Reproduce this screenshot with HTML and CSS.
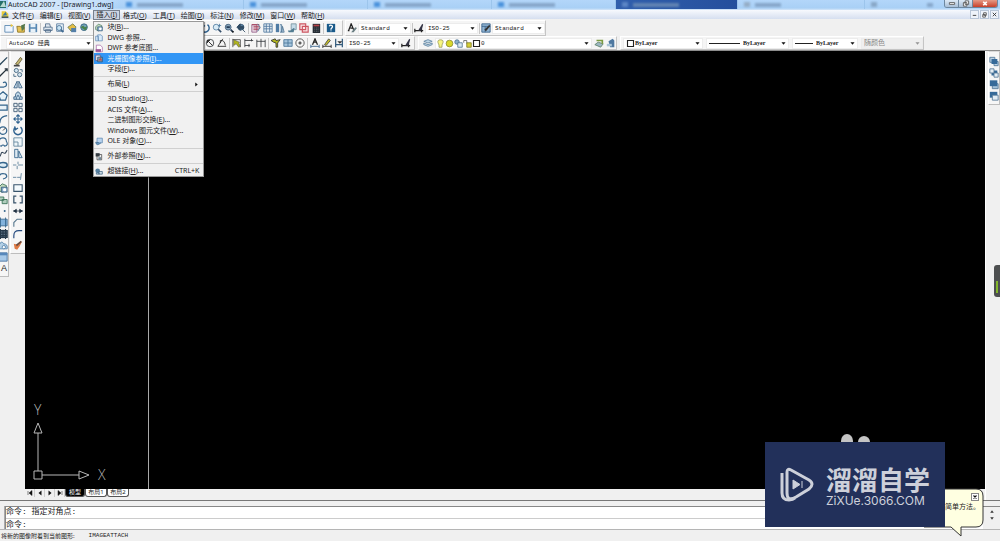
FILE: index.html
```html
<!DOCTYPE html>
<html lang="zh-CN">
<head>
<meta charset="utf-8">
<title>AutoCAD 2007 - [Drawing1.dwg]</title>
<link rel="stylesheet" href="styles.css">
</head>
<body>
<svg class="defs" aria-hidden="true">
<defs>
<symbol id="new" viewBox="0 0 12 12"><path d="M1 3h9l1 1v7H1z" fill="#eef6ff" stroke="#5683ad"/><path d="M8 1l3 2-3 2z" fill="#e8c339"/></symbol>
<symbol id="open" viewBox="0 0 12 12"><path d="M1 4h4l1 1h4v6H2z" fill="#e7c254" stroke="#8c7324"/><path d="M6 3l5-2-1 6-3 3z" fill="#55784d"/></symbol>
<symbol id="save" viewBox="0 0 12 12"><path d="M1 1h10v10H1z" fill="#5687b3"/><path d="M3 1h6v4H3zM3 7h6v4H3z" fill="#e8f1f8"/></symbol>
<symbol id="print" viewBox="0 0 12 12"><path d="M3 5V1h5l1 4M1 5h10v4H1zM3 8h6v3H3z" fill="#dfe7ef" stroke="#536e8c"/></symbol>
<symbol id="preview" viewBox="0 0 12 12"><path d="M2 1h8v9H2z" fill="#edf5fb" stroke="#597b9d"/><circle cx="5" cy="6" r="3" fill="#c9e4f4" stroke="#416b91"/><path d="M7 8l3 3" stroke="#416b91" stroke-width="2"/></symbol>
<symbol id="publish" viewBox="0 0 12 12"><path d="M1 5l6-4 4 4-6 5z" fill="#e4bd45" stroke="#6d7e56"/><path d="M5 6h6v5H5z" fill="#547fa8"/></symbol>
<symbol id="globe" viewBox="0 0 12 12"><circle cx="6" cy="5" r="4" fill="#76a4bc" stroke="#315f7b"/><path d="M2 5l3-2 2 2 3-1-2 5z" fill="#48824b"/></symbol>
<symbol id="zoom" viewBox="0 0 12 12"><circle cx="5" cy="5" r="3.5" fill="#d9ebf6" stroke="#5680a2"/><path d="M7.500 7.500L11 11" stroke="#344f6b" stroke-width="2"/><path d="M9 1v4M7 3h4" stroke="#527ea3"/></symbol>
<symbol id="zoomw" viewBox="0 0 12 12"><circle cx="5" cy="5" r="3.500" fill="#88a5bb" stroke="#415d78"/><path d="M3 5h4M8 8l3 3" stroke="#253b55" stroke-width="2"/><path d="M9 10h3l-1 2z" fill="#111"/></symbol>
<symbol id="zoomp" viewBox="0 0 12 12"><circle cx="6" cy="5" r="3.500" fill="#628baa" stroke="#355675"/><path d="M1 5l4-4v3h4v3H5v2zM8 8l3 3" fill="#304a62" stroke="#304a62"/></symbol>
<symbol id="props" viewBox="0 0 12 12"><path d="M1 2h6v9H1z" fill="#e9dce7" stroke="#945c86"/><path d="M1 2h9M3 4h7M3 6h8M3 8h6" stroke="#a73850"/><path d="M8 1l3 4-3 5" fill="none" stroke="#416b91"/></symbol>
<symbol id="grid" viewBox="0 0 12 12"><path d="M1 1h10v10H1zM1 4h10M1 7h10M4 1v10M8 1v10" fill="#e5edf4" stroke="#5278a0"/></symbol>
<symbol id="palette" viewBox="0 0 12 12"><path d="M1 1h4v10H1z" fill="#4f7ba4"/><path d="M6 2h2v9H6M9 4l2 7H8z" fill="#c1d6e7" stroke="#4f7594"/></symbol>
<symbol id="sheet" viewBox="0 0 12 12"><path d="M5 1h6v7H5z" fill="#c6dce8" stroke="#74919f"/><path d="M1 9c5 1 6-4 8-3L8 11H2z" fill="#527c91"/></symbol>
<symbol id="markup" viewBox="0 0 12 12"><path d="M1 1h7v7H1zM4 4h7v7H4z" fill="#fbe6e7" stroke="#cc5561" stroke-width="1.400"/></symbol>
<symbol id="calc" viewBox="0 0 12 12"><path d="M2 1h9v11H2z" fill="#262c34"/><path d="M3 2h7v2H3z" fill="#b64348"/><path d="M4 6h6M4 8h6M4 10h6" stroke="#6c7479" stroke-dasharray="1 1"/></symbol>
<symbol id="help" viewBox="0 0 12 12"><path d="M1 1h10v10H1z" fill="#195a8a"/><path d="M4 4q1-2 3-1t-1 4v1M6 9v1" fill="none" stroke="#fff" stroke-width="1.500"/></symbol>
<symbol id="textstyle" viewBox="0 0 12 12"><path d="M2 9L5 1l3 7M4 6h3M1 9h2" fill="none" stroke="#222" stroke-width="1.500"/><path d="M5 11l5-6 2 1-4 5z" fill="#6a7e82"/></symbol>
<symbol id="dimstyle" viewBox="0 0 12 12"><path d="M1 7v4M1 9h10M9 7v4" stroke="#222" stroke-width="1.500"/><path d="M5 9l5-8 1 1-2 7z" fill="#334"/></symbol>
<symbol id="tablestyle" viewBox="0 0 12 12"><path d="M1 1h10v10H1zM1 4h10M5 4v7" fill="#91b4d2" stroke="#355f89"/><path d="M4 8l6-6 1 2-5 6z" fill="#333"/></symbol>
<symbol id="diameter" viewBox="0 0 12 12"><circle cx="6" cy="6" r="4.500" fill="none" stroke="#34383c"/><path d="M3 3l6 6M3 6V3h3" stroke="#111" fill="none"/></symbol>
<symbol id="angle" viewBox="0 0 12 12"><path d="M7 1L1 10h10M4 6V3q5-1 6 6" fill="none" stroke="#222"/></symbol>
<symbol id="quickdim" viewBox="0 0 12 12"><path d="M1 1v10M10 2v9M1 2h9" stroke="#444" fill="none"/><path d="M2 2l7 3-1 1 2 4-2 1-3-4-3 2z" fill="#b0b41c" stroke="#444" stroke-width=".6"/></symbol>
<symbol id="baseline" viewBox="0 0 12 12"><path d="M1 1v10M9 1v3M6 7v4M1 3h10M1 9h6" stroke="#35393d" fill="none"/></symbol>
<symbol id="continue" viewBox="0 0 12 12"><path d="M1 2v9M6 1v10M11 2v9M1 4h10" stroke="#35393d" fill="none"/></symbol>
<symbol id="leader" viewBox="0 0 12 12"><path d="M0 3l5-2 1 2 5-1-3 4v5H6V6L3 5z" fill="#b0b41c" stroke="#333"/></symbol>
<symbol id="tolerance" viewBox="0 0 12 12"><path d="M1 2h10v8H1zM1 6h10M6 2v8" fill="#a8c6dd" stroke="#487397"/></symbol>
<symbol id="center" viewBox="0 0 12 12"><circle cx="6" cy="6" r="5" fill="none" stroke="#444"/><path d="M6 4v4M4 6h4" stroke="#111"/></symbol>
<symbol id="dimedit" viewBox="0 0 12 12"><path d="M3 8L6 1l3 7M4 5h4" fill="none" stroke="#222" stroke-width="1.500"/><path d="M1 8v4M11 8v4M1 10h10" stroke="#355f89"/></symbol>
<symbol id="dimtedit" viewBox="0 0 12 12"><path d="M1 8v4M1 10h10M11 8v4" stroke="#222"/><path d="M3 8l5-7 2 2-5 6z" fill="#c4bd28" stroke="#444"/></symbol>
<symbol id="dimup" viewBox="0 0 12 12"><path d="M2 1v10M10 1v10M2 8h8" stroke="#345c7d" stroke-width="1.500"/><path d="M4 4h6l-3 3z" fill="#333"/></symbol>
<symbol id="layers" viewBox="0 0 12 12"><path d="M1 4l5-2 5 2-5 2zM1 6l5 2 5-2v2l-5 2-5-2z" fill="#c0d8e9" stroke="#5e829f"/></symbol>
<symbol id="bulb" viewBox="0 0 12 12"><path d="M4 8Q0 1 6 1t2 7v3H4z" fill="#f7f582" stroke="#96965a"/></symbol>
<symbol id="sun" viewBox="0 0 12 12"><circle cx="6" cy="6" r="4.500" fill="#d9d82a" stroke="#858833"/></symbol>
<symbol id="freeze" viewBox="0 0 12 12"><circle cx="4" cy="4" r="3" fill="#8db1ca" stroke="#466b8b"/><path d="M5 5h6v6H5z" fill="#d9e8f1" stroke="#466b8b"/></symbol>
<symbol id="lock" viewBox="0 0 12 12"><path d="M1 5V2h4v4" fill="none" stroke="#555"/><path d="M5 5h6v6H5z" fill="#d5cf36" stroke="#777321"/></symbol>
<symbol id="swatch" viewBox="0 0 12 12"><path d="M2 2h8v8H2z" fill="#fff" stroke="#222" stroke-width="1.500"/></symbol>
<symbol id="layerprev" viewBox="0 0 12 12"><path d="M1 8l4-3 6 2-3 4z" fill="#9eb8c4" stroke="#5b7f68"/><path d="M3 3h7v4" fill="none" stroke="#7b9b40" stroke-width="2"/></symbol>
<symbol id="layerset" viewBox="0 0 12 12"><path d="M3 4l5-3 2 2v8H5z" fill="#4e78a0"/><path d="M1 7h6v3H1z" fill="#a9c4d7"/></symbol>
<symbol id="arrow" viewBox="0 0 12 12"><path d="M1 3h10L6 9z" fill="#111"/></symbol>
<symbol id="line" viewBox="0 0 12 12"><path d="M1 11L11 1" stroke="#29475b" stroke-width="1.500"/></symbol>
<symbol id="xline" viewBox="0 0 12 12"><path d="M1 11L11 1M8 1h3v3" stroke="#26333c" stroke-width="1.500" fill="none"/></symbol>
<symbol id="pline" viewBox="0 0 12 12"><path d="M1 9h6q4-1 3-4T6 4" stroke="#35658c" stroke-width="1.500" fill="none"/></symbol>
<symbol id="polygon" viewBox="0 0 12 12"><path d="M6 1l5 4-2 6H3L1 5z" stroke="#35658c" stroke-width="1.500" fill="#e8f2f8"/></symbol>
<symbol id="rect" viewBox="0 0 12 12"><path d="M1 3h10v6H1z" stroke="#35658c" stroke-width="1.500" fill="#e8f2f8"/></symbol>
<symbol id="arc" viewBox="0 0 12 12"><path d="M2 11q0-8 9-9" stroke="#35658c" stroke-width="1.500" fill="none"/></symbol>
<symbol id="circle" viewBox="0 0 12 12"><circle cx="6" cy="6" r="4.500" stroke="#35658c" stroke-width="1.500" fill="none"/><path d="M6 6l3-3" stroke="#222"/></symbol>
<symbol id="cloud" viewBox="0 0 12 12"><path d="M2 4q0-3 4-3 4 0 4 4 3 5-2 6-2-3-4 0-5-1-2-4" stroke="#35658c" stroke-width="1.300" fill="none"/></symbol>
<symbol id="spline" viewBox="0 0 12 12"><path d="M1 10c3 0 2-7 5-5s3 0 5-3" stroke="#345" stroke-width="1.300" fill="none"/></symbol>
<symbol id="ellipse" viewBox="0 0 12 12"><ellipse cx="6" cy="6" rx="5" ry="3" stroke="#35658c" stroke-width="1.800" fill="#dcebf3"/></symbol>
<symbol id="earc" viewBox="0 0 12 12"><path d="M1 6q2-5 8-3 4 4-3 6" stroke="#35658c" stroke-width="1.500" fill="none"/></symbol>
<symbol id="block" viewBox="0 0 12 12"><path d="M1 5l4-4 5 2v6l-5 2-4-2z" fill="#c6dcbf" stroke="#386e55"/><path d="M4 5h7v6H4z" fill="#87aaca" stroke="#365b79"/><circle cx="8" cy="8" r="2" fill="#fff"/></symbol>
<symbol id="mkblock" viewBox="0 0 12 12"><path d="M1 3h6v4H1zM5 6h6v5H5z" fill="#b1cdbd" stroke="#346e52"/></symbol>
<symbol id="point" viewBox="0 0 12 12"><circle cx="8" cy="6" r="1.200" fill="#35658c"/></symbol>
<symbol id="hatch" viewBox="0 0 12 12"><path d="M1 2h10v8H1zM3 0v12M9 0v12" stroke="#35658c" fill="#82b2dc"/></symbol>
<symbol id="gradient" viewBox="0 0 12 12"><path d="M1 2h10v8H1zM3 0v12M9 0v12M2 5h9M2 8h9M6 1v10" stroke="#26394a" stroke-width="1.500" fill="#63788c"/></symbol>
<symbol id="region" viewBox="0 0 12 12"><path d="M1 10V6q3-7 6-2 5 0 4 6z" stroke="#517fa8" fill="#b3d0e6"/><circle cx="7" cy="8" r="2" fill="#fff" stroke="#517fa8"/></symbol>
<symbol id="table" viewBox="0 0 12 12"><path d="M1 1h10v10H1z" stroke="#3e6c9a" fill="#a8c9e8"/><path d="M1 1h10v3H1z" fill="#5888bb"/></symbol>
<symbol id="erase" viewBox="0 0 12 12"><path d="M3 9l6-8 2 2-5 7z" fill="#c5b774" stroke="#655c35"/><path d="M1 11h7" stroke="#444" stroke-width="2"/></symbol>
<symbol id="copy" viewBox="0 0 12 12"><circle cx="4" cy="3" r="2.500" fill="#d3e4ef" stroke="#375b77"/><circle cx="8" cy="8" r="2.500" fill="#d3e4ef" stroke="#375b77"/><path d="M8 2h3v3M1 7v3h3" stroke="#375b77" fill="none"/></symbol>
<symbol id="mirror" viewBox="0 0 12 12"><path d="M5 2v8H1zM7 2v8h4z" fill="#c9ddeb" stroke="#365e82"/></symbol>
<symbol id="offset" viewBox="0 0 12 12"><path d="M1 10V7h2V4q3-6 6 0v3h2v3zM4 10V8l2-3 2 3v2" fill="#bdd4e5" stroke="#365e82"/></symbol>
<symbol id="array" viewBox="0 0 12 12"><path d="M1 1h4v4H1zM7 1h4v4H7zM1 7h4v4H1zM7 7h4v4H7z" fill="#eef5f9" stroke="#35516b"/></symbol>
<symbol id="move" viewBox="0 0 12 12"><path d="M6 1v10M1 6h10M4 3l2-2 2 2M4 9l2 2 2-2M3 4L1 6l2 2M9 4l2 2-2 2" fill="none" stroke="#30628f" stroke-width="1.300"/></symbol>
<symbol id="rotate" viewBox="0 0 12 12"><path d="M3 2a5 5 0 1 0 6 0M2 1l1 4 3-2" fill="none" stroke="#30628f" stroke-width="1.700"/></symbol>
<symbol id="scale" viewBox="0 0 12 12"><path d="M1 1h10v10H1zM1 6h5v5" fill="#eef5f9" stroke="#5d8099"/></symbol>
<symbol id="stretch" viewBox="0 0 12 12"><path d="M2 1h4v10H2zM7 3l4 8H7z" fill="#dfeaf2" stroke="#35658c"/></symbol>
<symbol id="trim" viewBox="0 0 12 12"><path d="M0 6h4M6 6h6M6 2v3M5 7v4" stroke="#547b96"/></symbol>
<symbol id="extend" viewBox="0 0 12 12"><path d="M0 7h4M5 7h4M10 2L9 10" stroke="#547b96"/></symbol>
<symbol id="breakp" viewBox="0 0 12 12"><path d="M1 2h10v8H1z" fill="#f4fafd" stroke="#38536b" stroke-width="1.300"/></symbol>
<symbol id="break" viewBox="0 0 12 12"><path d="M4 10H1V2h3M8 2h3v8H8" fill="none" stroke="#38536b" stroke-width="1.500"/></symbol>
<symbol id="join" viewBox="0 0 12 12"><path d="M0 6h12M1 6l3-2v4zM11 6L8 4v4z" fill="#234" stroke="#234"/></symbol>
<symbol id="chamfer" viewBox="0 0 12 12"><path d="M1 11V6l4-4h6" fill="none" stroke="#56778e" stroke-width="1.300"/></symbol>
<symbol id="fillet" viewBox="0 0 12 12"><path d="M1 11V8q0-6 6-6h4" fill="none" stroke="#274c80" stroke-width="1.400"/></symbol>
<symbol id="explode" viewBox="0 0 12 12"><path d="M1 4l5 1 5-4-3 6-3 4-3-1z" fill="#df7a45"/><path d="M4 6l6-5" stroke="#684a3e" stroke-width="2"/></symbol>
<symbol id="dwg" viewBox="0 0 12 12"><path d="M1 4h4v7H1zM4 2h5l2 2v7H5z" fill="#d8eafa" stroke="#5983b0"/></symbol>
<symbol id="dwf" viewBox="0 0 12 12"><path d="M2 1h6l3 3v7H2z" fill="#fff" stroke="#a05ba2"/><path d="M1 7h8v4H1z" fill="#9a5596"/></symbol>
<symbol id="image" viewBox="0 0 12 12"><path d="M1 1h7v8H1z" fill="#e8e8f4" stroke="#624c78"/><path d="M4 4h7v7H4z" fill="#86a3ad" stroke="#284967"/><path d="M5 9l3-4 3 4z" fill="#c54b48"/></symbol>
<symbol id="ole" viewBox="0 0 12 12"><path d="M3 1h8v7H3z" fill="#b9d4ef" stroke="#517da7"/><path d="M9 8q-7 6-8-1l5 1" fill="#699bc3" stroke="#3c678c"/></symbol>
<symbol id="xref" viewBox="0 0 12 12"><path d="M3 3h7v8H3z" fill="#eee" stroke="#333"/><path d="M1 1h6v5H1z" fill="#343c43"/><path d="M5 7h4v4H5z" fill="#718796"/></symbol>
<symbol id="link" viewBox="0 0 12 12"><circle cx="4" cy="5" r="3.500" fill="#547f9f"/><path d="M2 8h4v2H2zM6 6h5v4H6z" fill="#cbdce6" stroke="#315879"/></symbol>
<symbol id="front" viewBox="0 0 12 12"><path d="M1 1h6v6H1zM6 6h5v5H6z" fill="#bad2e5" stroke="#527695"/><path d="M3 3h7v6H3z" fill="#366a99"/></symbol>
<symbol id="back" viewBox="0 0 12 12"><path d="M3 3h7v6H3z" fill="#366a99"/><path d="M1 1h5v5H1zM6 6h5v5H6z" fill="#e3edf4" stroke="#527695"/></symbol>
<symbol id="above" viewBox="0 0 12 12"><path d="M4 5h7v6H4z" fill="#a4c2d9" stroke="#527695"/><path d="M1 1h9v7H1z" fill="#366a99"/></symbol>
<symbol id="under" viewBox="0 0 12 12"><path d="M1 1h9v7H1z" fill="#366a99"/><path d="M4 5h7v6H4z" fill="#e3edf4" stroke="#527695"/></symbol>
<symbol id="doc" viewBox="0 0 12 12"><path d="M1 1h6l4 4v6H1z" fill="#e7cb38"/><path d="M2 8l5-6 2 5z" fill="#3976a7"/><path d="M1 9h10v2H1z" fill="#23425c"/></symbol>
<symbol id="first" viewBox="0 0 12 12"><path d="M2 2v8M10 1v10L4 6z" fill="#111" stroke="#111"/></symbol>
<symbol id="prev" viewBox="0 0 12 12"><path d="M9 1v10L3 6z" fill="#111"/></symbol>
<symbol id="next" viewBox="0 0 12 12"><path d="M3 1v10l6-5z" fill="#111"/></symbol>
<symbol id="last" viewBox="0 0 12 12"><path d="M10 2v8M2 1v10l6-5z" fill="#111" stroke="#111"/></symbol>
</defs>
</svg>

<header class="titlebar">
  <svg class="app-icon" viewBox="0 0 8 10"><path d="M0 1h6v7H0z" fill="#26706b"/><path d="M0 7L4 1l2 6z" fill="#b8dad1"/></svg>
  <h1 class="title">AutoCAD 2007 - [Drawing1.dwg]</h1>
  <div class="glass" aria-hidden="true">
    <span class="ghost"></span><span class="ghost"></span><span class="ghost"></span><span class="ghost"></span><span class="ghost ghost-active"></span><span class="ghost ghost-grey"></span><span class="ghost ghost-small"></span>
  </div>
  <div class="window-buttons">
    <button class="wbtn" aria-label="最小化"><svg viewBox="0 0 12 8"><path d="M3 3h6v2H3z" fill="#fff" stroke="#555"/></svg></button>
    <button class="wbtn" aria-label="还原"><svg viewBox="0 0 12 8"><path d="M5 1h4v4H5zM3 3h4v4H3z" fill="#fff" stroke="#555"/></svg></button>
    <button class="wbtn wbtn-close" aria-label="关闭"><svg viewBox="0 0 12 8"><path d="M4 2l4 4M8 2L4 6" stroke="#fff" stroke-width="2"/></svg></button>
  </div>
</header>

<nav class="menubar">
  <svg class="doc-icon"><use href="#doc"/></svg>
  <button class="menu-btn">文件(<u>F</u>)</button>
  <button class="menu-btn">编辑(<u>E</u>)</button>
  <button class="menu-btn">视图(<u>V</u>)</button>
  <div class="menu-holder">
    <button class="menu-btn menu-open" aria-expanded="true">插入(<u>I</u>)</button>
    <div class="dropdown" role="menu">
      <div class="menu-group">
        <button class="item" role="menuitem"><svg><use href="#block"/></svg><span>块(<u>B</u>)...</span></button>
        <button class="item" role="menuitem"><svg><use href="#dwg"/></svg><span>DWG 参照...</span></button>
        <button class="item" role="menuitem"><svg><use href="#dwf"/></svg><span>DWF 参考底图...</span></button>
        <button class="item item-active" role="menuitem"><svg><use href="#image"/></svg><span>光栅图像参照(<u>I</u>)...</span></button>
        <button class="item" role="menuitem"><svg></svg><span>字段(<u>F</u>)...</span></button>
      </div>
      <div class="menu-group">
        <button class="item" role="menuitem"><svg></svg><span>布局(<u>L</u>)</span><svg class="sub"><use href="#next"/></svg></button>
      </div>
      <div class="menu-group">
        <button class="item" role="menuitem"><svg></svg><span>3D Studio(<u>3</u>)...</span></button>
        <button class="item" role="menuitem"><svg></svg><span>ACIS 文件(<u>A</u>)...</span></button>
        <button class="item" role="menuitem"><svg></svg><span>二进制图形交换(<u>E</u>)...</span></button>
        <button class="item" role="menuitem"><svg></svg><span>Windows 图元文件(<u>W</u>)...</span></button>
        <button class="item" role="menuitem"><svg><use href="#ole"/></svg><span>OLE 对象(<u>O</u>)...</span></button>
      </div>
      <div class="menu-group">
        <button class="item" role="menuitem"><svg><use href="#xref"/></svg><span>外部参照(<u>N</u>)...</span></button>
      </div>
      <div class="menu-group">
        <button class="item" role="menuitem"><svg><use href="#link"/></svg><span>超链接(<u>H</u>)...</span><span class="shortcut">CTRL+K</span></button>
      </div>
    </div>
  </div>
  <button class="menu-btn">格式(<u>O</u>)</button>
  <button class="menu-btn">工具(<u>T</u>)</button>
  <button class="menu-btn">绘图(<u>D</u>)</button>
  <button class="menu-btn">标注(<u>N</u>)</button>
  <button class="menu-btn">修改(<u>M</u>)</button>
  <button class="menu-btn">窗口(<u>W</u>)</button>
  <button class="menu-btn">帮助(<u>H</u>)</button>
  <div class="mdi-buttons">
    <button aria-label="最小化文档"><svg viewBox="0 0 8 8"><path d="M2 5h4" stroke="#333"/></svg></button>
    <button aria-label="还原文档"><svg viewBox="0 0 8 8"><path d="M3 2h3v3H3zM2 4h3v3H2z" fill="#fff" stroke="#555"/></svg></button>
    <button aria-label="关闭文档"><svg viewBox="0 0 8 8"><path d="M2 2l4 4M6 2L2 6" stroke="#333"/></svg></button>
  </div>
</nav>

<div class="toolrow toolrow-top">
  <div class="bar bar-standard">
    <div class="icons icons-file">
      <svg><use href="#new"/></svg><svg><use href="#open"/></svg><svg><use href="#save"/></svg><i class="div"></i><svg><use href="#print"/></svg><svg><use href="#preview"/></svg><svg><use href="#publish"/></svg><svg><use href="#globe"/></svg>
    </div>
    <div class="icons">
      <svg><use href="#rotate"/></svg><svg><use href="#zoom"/></svg><svg><use href="#zoomw"/></svg><svg><use href="#zoomp"/></svg><i class="div"></i><svg><use href="#props"/></svg><svg><use href="#grid"/></svg><svg><use href="#palette"/></svg><svg><use href="#sheet"/></svg><svg><use href="#markup"/></svg><svg><use href="#calc"/></svg><i class="div"></i><svg><use href="#help"/></svg>
    </div>
  </div>
  <div class="bar bar-styles">
    <svg><use href="#textstyle"/></svg>
    <label class="combo combo-style"><select aria-label="文字样式"><option>Standard</option></select><svg class="caret"><use href="#arrow"/></svg></label>
    <i class="div"></i><svg><use href="#dimstyle"/></svg>
    <label class="combo combo-style"><select aria-label="标注样式"><option>ISO-25</option></select><svg class="caret"><use href="#arrow"/></svg></label>
    <i class="div"></i><svg><use href="#tablestyle"/></svg>
    <label class="combo combo-style"><select aria-label="表格样式"><option>Standard</option></select><svg class="caret"><use href="#arrow"/></svg></label>
  </div>
</div>

<div class="toolrow toolrow-bottom">
  <div class="bar bar-workspace">
    <label class="combo combo-workspace"><select aria-label="工作空间"><option>AutoCAD 经典</option></select><svg class="caret"><use href="#arrow"/></svg></label>
  </div>
  <div class="bar bar-dim">
    <svg><use href="#diameter"/></svg><svg><use href="#angle"/></svg><i class="div"></i><svg><use href="#quickdim"/></svg><svg><use href="#baseline"/></svg><svg><use href="#continue"/></svg><i class="div"></i><svg><use href="#leader"/></svg><svg><use href="#tolerance"/></svg><svg><use href="#center"/></svg><i class="div"></i><svg><use href="#dimedit"/></svg><svg><use href="#dimtedit"/></svg><svg><use href="#dimup"/></svg>
    <label class="combo combo-style"><select aria-label="标注样式控制"><option>ISO-25</option></select><svg class="caret"><use href="#arrow"/></svg></label>
    <svg><use href="#dimstyle"/></svg>
  </div>
  <div class="bar bar-layers">
    <svg><use href="#layers"/></svg>
    <label class="combo combo-layer"><svg><use href="#bulb"/></svg><svg><use href="#sun"/></svg><svg><use href="#freeze"/></svg><svg><use href="#lock"/></svg><svg><use href="#swatch"/></svg><select aria-label="图层"><option>0</option></select><svg class="caret"><use href="#arrow"/></svg></label>
    <svg><use href="#layerprev"/></svg><svg><use href="#layerset"/></svg>
  </div>
  <div class="bar bar-props">
    <label class="combo combo-color"><svg><use href="#swatch"/></svg><select aria-label="颜色"><option>ByLayer</option></select><svg class="caret"><use href="#arrow"/></svg></label>
    <label class="combo combo-linetype"><i class="rule rule-long"></i><select aria-label="线型"><option>ByLayer</option></select><svg class="caret"><use href="#arrow"/></svg></label>
    <label class="combo combo-weight"><i class="rule"></i><select aria-label="线宽"><option>ByLayer</option></select><svg class="caret"><use href="#arrow"/></svg></label>
    <label class="combo combo-plot"><select aria-label="打印样式" disabled><option>随颜色</option></select><svg class="caret"><use href="#arrow"/></svg></label>
  </div>
</div>

<main class="workspace">
  <aside class="dock">
    <div class="strip strip-draw">
      <svg><use href="#line"/></svg><svg><use href="#xline"/></svg><svg><use href="#pline"/></svg><svg><use href="#polygon"/></svg><svg><use href="#rect"/></svg><svg><use href="#arc"/></svg><svg><use href="#circle"/></svg><svg><use href="#cloud"/></svg><svg><use href="#spline"/></svg><svg><use href="#ellipse"/></svg><svg><use href="#earc"/></svg><svg><use href="#block"/></svg><svg><use href="#mkblock"/></svg><svg><use href="#point"/></svg><svg><use href="#hatch"/></svg><svg><use href="#gradient"/></svg><svg><use href="#region"/></svg><svg><use href="#table"/></svg><button class="mtext">A</button>
    </div>
    <div class="strip">
      <svg><use href="#erase"/></svg><svg><use href="#copy"/></svg><svg><use href="#mirror"/></svg><svg><use href="#offset"/></svg><svg><use href="#array"/></svg><svg><use href="#move"/></svg><svg><use href="#rotate"/></svg><svg><use href="#scale"/></svg><svg><use href="#stretch"/></svg><svg><use href="#trim"/></svg><svg><use href="#extend"/></svg><svg><use href="#breakp"/></svg><svg><use href="#break"/></svg><svg><use href="#join"/></svg><svg><use href="#chamfer"/></svg><svg><use href="#fillet"/></svg><svg><use href="#explode"/></svg>
    </div>
  </aside>
  <section class="center">
    <div class="canvas">
      <i class="drawn-line"></i>
      <svg class="ucs" viewBox="0 0 84 84"><path d="M5 71h8v8H5zM9 71V33M5 33h8L9 23zM13 75h37M50 71v8l10-4z" fill="none" stroke="#b8b8b8"/><text x="5" y="15">Y</text><text x="69" y="80">X</text></svg>
    </div>
    <div class="tabs">
      <button class="tabnav" aria-label="第一个"><svg><use href="#first"/></svg></button><button class="tabnav" aria-label="上一个"><svg><use href="#prev"/></svg></button><button class="tabnav" aria-label="下一个"><svg><use href="#next"/></svg></button><button class="tabnav" aria-label="最后一个"><svg><use href="#last"/></svg></button>
      <button class="tab tab-active">模型</button><button class="tab">布局1</button><button class="tab">布局2</button>
    </div>
  </section>
  <aside class="dock-right">
    <div class="strip strip-order">
      <svg><use href="#front"/></svg><svg><use href="#back"/></svg><svg><use href="#above"/></svg><svg><use href="#under"/></svg>
    </div>
    <div class="gadget"><i></i></div>
  </aside>
</main>

<section class="command">
  <i class="grip"></i>
  <div class="command-lines">
    <p class="history">命令: 指定对角点:</p>
    <label class="prompt">命令:<input type="text" aria-label="命令"></label>
  </div>
  <div class="scroller"><svg viewBox="0 0 12 12"><path d="M3 8h6L6 4z" fill="#333"/></svg><svg viewBox="0 0 12 12"><path d="M3 4h6L6 8z" fill="#333"/></svg></div>
</section>

<footer class="status"><span>将新的图像附着到当前图形:</span><span class="status-cmd">IMAGEATTACH</span></footer>

<div class="balloon">
  <svg class="balloon-shape" viewBox="0 0 60 50"><path d="M0 1H52Q59 1 59 8V32Q59 39 52 39H37V48L27 39H0z" fill="#ffffe1" stroke="#333"/></svg>
  <button class="balloon-close" aria-label="关闭提示"><svg viewBox="0 0 8 8"><path d="M2 2l4 4M6 2L2 6" stroke="#111" stroke-width="1.500"/></svg></button>
  <p class="balloon-text">简单方法。</p>
</div>

<div class="watermark">
  <svg class="ears" viewBox="0 0 30 8"><ellipse cx="6" cy="7" rx="6" ry="7" fill="#c4c4c4"/><ellipse cx="23" cy="8" rx="6" ry="6" fill="#c4c4c4"/></svg>
  <svg class="logo" viewBox="0 0 36 36"><path d="M3 6V26Q3 33 10 33Q14 33 16 31" fill="none" stroke="#cdd0da" stroke-width="3"/><path d="M8 26V5Q8 1 12 3L30 13Q36 17 30 22L17 30Q8 35 8 26" fill="none" stroke="#cdd0da" stroke-width="3"/><path d="M14 13v9l7-4.500zM23 14v7" fill="#cdd0da" stroke="#cdd0da"/></svg>
  <div class="brand"><strong>溜溜自学</strong><span>ZiXUe.3066.COM</span></div>
</div>
</body>
</html>
```
FILE: styles.css
```css
* { box-sizing: border-box; }
body {
  margin: 0;
  height: 100vh;
  display: flex;
  flex-direction: column;
  position: relative;
  overflow: hidden;
  background: #f0f0f0;
  color: #222;
  font: 7px/10px "Noto Sans", "Noto Sans CJK SC", sans-serif;
}
button, select, input { font: inherit; color: inherit; border: 0; padding: 0; margin: 0; background: none; }
p, h1 { margin: 0; font-weight: 400; }
svg { width: 10px; height: 10px; flex: none; display: block; }
.defs { position: absolute; width: 0; height: 0; }

.titlebar { height: 10px; display: flex; background: linear-gradient(#b3d6fa, #a9d0f6 80%, #d5e6f8); flex: none; }
.app-icon { width: 8px; }
.title { width: 112px; font-size: 7px; line-height: 9px; color: #17212c; background: linear-gradient(90deg, #dcecfb, #c5e0fa 80%, transparent); }
.glass { flex: 1; display: grid; grid-template-columns: repeat(4, 124px) 122px 127px 1fr; overflow: hidden; }
.ghost { height: 9px; display: flex; align-items: center; gap: 5px; padding-left: 6px; border-right: 1px solid #9cc5ec; }
.ghost::before { content: ""; width: 6px; height: 5px; background: #4c93dc; filter: blur(1px); }
.ghost::after { content: ""; width: 46px; height: 4px; background: #7896b8; filter: blur(1px); opacity: .7; }
.ghost-active { background: linear-gradient(90deg, #315fac, #244f9d); }
.ghost-active::before { background: #5c86c6; }
.ghost-grey::before { background: #96aec7; }
.ghost-grey::after { width: 26px; }
.ghost-small { border: 0; }
.ghost-small::before { background: #8aa8c8; }
.ghost-small::after { width: 6px; margin-left: 45px; }
.window-buttons { display: flex; height: 8px; margin-right: 2px; border: 1px solid #6d879f; border-top: 0; border-radius: 0 0 3px 3px; overflow: hidden; }
.wbtn { width: 14px; background: linear-gradient(#dce9f6, #a9bfd6); border-right: 1px solid #6d879f; display: grid; place-items: center; }
.wbtn svg { width: 12px; height: 7px; }
.wbtn-close { width: 24px; border: 0; background: linear-gradient(#e49a87, #c8402a); }

.menubar { height: 10px; display: flex; flex: none; padding-left: 1px; background: linear-gradient(#f7f9fd, #d6dff0); border-bottom: 1px solid #f0f0f0; }
.doc-icon { width: 8px; height: 9px; }
.menu-btn { padding: 0 3px; line-height: 9px; height: 10px; white-space: nowrap; }
.menu-holder { position: relative; }
.menu-open { border: 1px solid #77808e; line-height: 8px; padding: 0 2px; background: #cdd5e3; }
.mdi-buttons { margin-left: auto; display: flex; gap: 1px; padding-right: 1px; }
.mdi-buttons button { width: 9px; height: 9px; border: 1px solid #b8c6d8; background: #eef3fa; }
.mdi-buttons svg { width: 7px; height: 7px; }
.dropdown { position: absolute; left: 0; top: 11px; z-index: 5; width: 111px; background: #f1f1f1; border: 1px solid #999; box-shadow: 1px 1px 1px #0006; }
.menu-group + .menu-group { border-top: 1px solid #d0d0d0; padding-top: 2px; margin-top: 2px; }
.item { width: 100%; height: 10px; line-height: 10px; display: flex; align-items: center; gap: 4px; padding: 0 4px 0 1px; text-align: left; white-space: nowrap; }
.item:nth-child(even) { height: 11px; }
.item svg { width: 8px; height: 9px; }
.item .sub { width: 5px; height: 5px; }
.item span { flex: 1; }
.item .shortcut { flex: none; }
.item-active { background: #3296f5; color: #fff; }

.toolrow { display: flex; flex: none; }
.toolrow-top { height: 16px; gap: 2px; }
.toolrow-bottom { height: 14px; gap: 3px; }
.bar { display: flex; align-items: center; gap: 2px; border: 1px solid; border-color: #fff #c5c5c5 #c5c5c5 #fff; background: #f5f5f5; }
.icons { display: flex; gap: 2px; align-items: center; }
.div { width: 1px; height: 11px; background: #c6c6c6; flex: none; }
.bar-standard { width: 343px; padding: 0 6px 0 3px; justify-content: space-between; }
.bar-styles { padding-left: 1px; gap: 1px; }
.combo { display: flex; align-items: center; height: 11px; background: #fff; border: 1px solid #ececec; flex: none; padding: 0 2px; }
.combo select { flex: 1; min-width: 0; height: 9px; appearance: none; font: 6px/9px "Liberation Mono", "Noto Sans CJK SC", monospace; opacity: 1; }
.combo svg { width: 9px; height: 9px; }
.combo .caret { width: 5px; height: 5px; }
.combo-style { width: 53px; }
.bar-workspace { width: 202px; padding-left: 5px; }
.combo-workspace { width: 88px; }
.bar-dim { width: 210px; border-left: 0; }
.bar-layers { width: 199px; padding-left: 4px; }
.combo-layer { flex: 1; padding-left: 0; }
.bar-props { gap: 3px; padding-left: 2px; }
.combo-color { width: 80px; }
.combo-linetype { width: 83px; }
.combo-weight { width: 66px; }
.combo-color select, .combo-linetype select, .combo-weight select { font-family: "Liberation Serif", serif; font-weight: 700; }
.combo-plot { width: 62px; background: #efefef; color: #888; }
.combo-plot select { font-size: 7px; }
.combo-plot .caret { opacity: .4; }
.rule { width: 18px; height: 1px; background: #222; margin-right: 3px; flex: none; }
.rule-long { width: 31px; }

.workspace { flex: 1; display: flex; min-height: 0; border-top: 1px solid #8c8c8c; }
.dock { width: 25px; display: flex; align-items: flex-start; gap: 1px; flex: none; }
.strip { padding: 4px 2px 2px; background: #f6f6f6; border: 1px solid; border-color: #d9d9d9 #bdbdbd #bdbdbd #fff; flex: none; }
.strip > svg, .mtext { display: block; width: 10px; height: 11px; }
.strip > :nth-child(even) { height: 12px; }
.strip-draw { width: 9px; padding-left: 0; padding-right: 0; border-left: 0; display: flex; flex-direction: column; align-items: flex-end; }
.mtext { width: 8px; font: 9px/11px "Liberation Sans", sans-serif; text-align: center; }
.center { flex: 1; min-width: 0; display: flex; flex-direction: column; }
.canvas { flex: 1; position: relative; background: #000; overflow: hidden; }
.drawn-line { position: absolute; left: 123px; top: 0; bottom: 0; width: 1px; background: #a9a9a9; }
.ucs { position: absolute; left: 4px; bottom: 5px; width: 84px; height: 84px; overflow: visible; }
.ucs text { font: 300 14px "Open Sans", sans-serif; fill: #b8b8b8; }
.tabs { height: 11px; display: flex; align-items: flex-start; }
.tabnav { width: 10px; height: 8px; border-right: 1px solid #ccc; display: grid; place-items: center; }
.tabnav svg { width: 6px; height: 6px; }
.tab { width: 22px; height: 8px; line-height: 7px; background: #fff; border: 1px solid #555; border-top: 0; border-radius: 0 0 3px 3px; white-space: nowrap; font-size: 6px; }
.tab-active { width: 20px; background: #000; color: #fff; }
.dock-right { width: 15px; display: flex; flex-direction: column; justify-content: space-between; align-items: flex-end; padding-bottom: 203px; border-left: 1px solid #fff; flex: none; }
.strip-order { width: 12px; padding: 4px 0 2px; }
.gadget { width: 6px; height: 32px; border-radius: 3px 0 0 3px; background: #4d4f50; padding: 16px 2px 3px; }
.gadget i { display: block; height: 12px; background: #83b62b; }

.command { flex: none; display: flex; height: 30px; padding-top: 5px; border-top: 1px solid #777; border-bottom: 1px solid #b5b5b5; }
.grip { width: 5px; border-right: 1px solid #aaa; }
.command-lines { flex: 1; border-top: 1px solid #888; border-left: 1px solid #888; background: #fff; font: 8px/11px "Liberation Mono", "Noto Sans CJK SC", monospace; }
.history { border-bottom: 1px solid #ccc; height: 12px; line-height: 10px; }
.prompt { display: flex; height: 11px; }
.prompt input { flex: 1; height: 11px; outline: 0; }
.scroller { width: 17px; display: flex; flex-direction: column; align-items: center; border-top: 1px solid #888; padding-top: 1px; }
.scroller svg { width: 8px; height: 7px; }
.status { flex: none; height: 11px; display: flex; gap: 14px; padding-left: 1px; font-size: 6px; line-height: 12px; white-space: nowrap; }
.status-cmd { font: 6px/12px "Liberation Mono", monospace; }

.balloon { position: absolute; right: 16px; bottom: 3px; width: 60px; height: 50px; }
.balloon-shape { width: 60px; height: 50px; }
.balloon-close { position: absolute; right: 5px; top: 5px; width: 8px; height: 8px; border: 1px solid #888; background: #fff; }
.balloon-close svg { width: 6px; height: 6px; }
.balloon-text { position: absolute; right: 4px; top: 14px; white-space: nowrap; }
.watermark { position: absolute; right: 55px; bottom: 14px; width: 180px; height: 85px; background: #22305a; color: #cdd0da; display: flex; align-items: center; gap: 11px; padding-left: 14px; }
.ears { position: absolute; left: 76px; top: -8px; width: 30px; height: 8px; }
.logo { width: 36px; height: 36px; }
.brand { display: flex; flex-direction: column; }
.brand strong { font: 700 26px/32px "Noto Sans CJK SC", sans-serif; }
.brand span { font: 12px/12px "Inter", sans-serif; }
```
